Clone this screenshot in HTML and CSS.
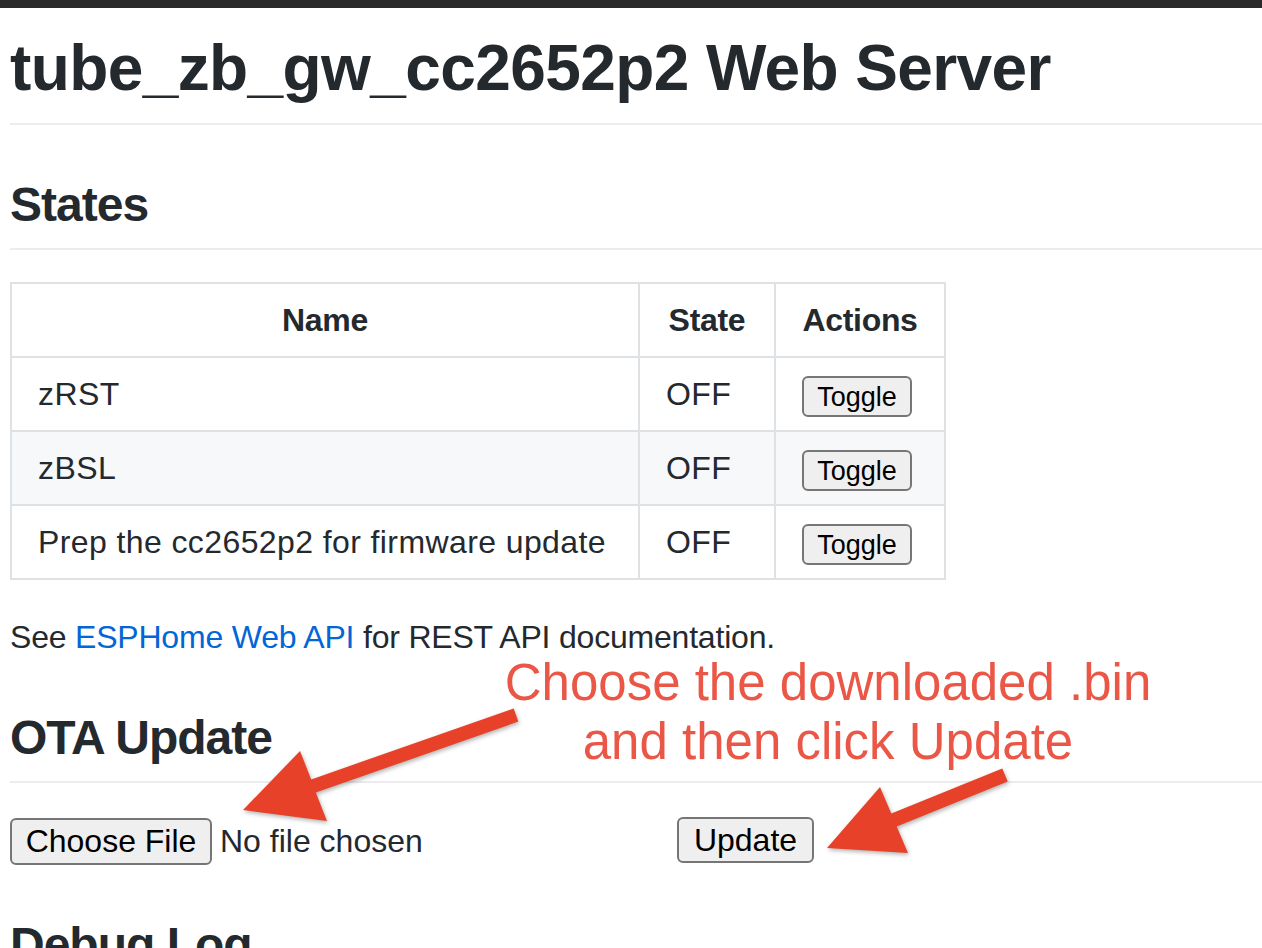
FILE: index.html
```html
<!DOCTYPE html>
<html lang="en">
<head>
<meta charset="utf-8">
<title>tube_zb_gw_cc2652p2 Web Server</title>
<link rel="stylesheet" href="styles.css">
</head>
<body>
<div class="topbar"></div>
<main class="page">
  <h1 class="title">tube_zb_gw_cc2652p2 Web Server</h1>

  <h2 class="section section-states">States</h2>
  <table class="states">
    <thead>
      <tr>
        <th class="col-name">Name</th>
        <th class="col-state">State</th>
        <th class="col-actions">Actions</th>
      </tr>
    </thead>
    <tbody>
      <tr>
        <td>zRST</td>
        <td>OFF</td>
        <td class="actions"><button type="button" class="btn-toggle">Toggle</button></td>
      </tr>
      <tr>
        <td>zBSL</td>
        <td>OFF</td>
        <td class="actions"><button type="button" class="btn-toggle">Toggle</button></td>
      </tr>
      <tr>
        <td>Prep the cc2652p2 for firmware update</td>
        <td>OFF</td>
        <td class="actions"><button type="button" class="btn-toggle">Toggle</button></td>
      </tr>
    </tbody>
  </table>

  <p class="note">See <a class="link" href="#">ESPHome Web API</a> for REST API documentation.</p>

  <h2 class="section section-ota">OTA Update</h2>
  <form class="ota">
    <div class="file-input">
      <span class="btn btn-file">Choose File</span>
      <span class="file-status">No file chosen</span>
    </div>
    <button type="button" class="btn btn-update">Update</button>
  </form>

  <h2 class="section section-debug">Debug Log</h2>
  <pre class="log"></pre>
</main>

<div class="annotation">Choose the downloaded .bin<br>and then click Update</div>

<svg class="arrows" width="1262" height="948" viewBox="0 0 1262 948" aria-hidden="true">
  <polygon class="arrow" points="513.7,708.4 518.3,721.6 315.8,792.6 327,821 243,810 300,751 311.2,779.4"/>
  <polygon class="arrow" points="1002.3,768.5 1007.7,781.5 896.7,826.5 908,853 827,848 880,787 891.3,813.5"/>
</svg>
</body>
</html>
```

FILE: styles.css
```css
html, body {
  margin: 0;
  padding: 0;
  overflow: hidden;
  background: #ffffff;
}

body {
  position: relative;
  width: 1262px;
  height: 948px;
  font-family: "Liberation Sans", Arial, Helvetica, sans-serif;
  color: #24292e;
}

.topbar {
  height: 8px;
  background: #2a2a2a;
}

.page {
  padding-left: 10px;
}

.title {
  margin: 20px 0 0;
  padding-bottom: 15px;
  font-size: 64px;
  line-height: 80px;
  font-weight: 700;
  letter-spacing: -0.6px;
  white-space: nowrap;
  border-bottom: 2px solid #eaecef;
}

.section {
  margin: 0;
  padding-bottom: 13px;
  font-size: 48px;
  line-height: 60px;
  font-weight: 700;
  letter-spacing: -1px;
  border-bottom: 2px solid #eaecef;
}

.section-states {
  margin-top: 50px;
}

.section-ota {
  margin-top: 47px;
}

.section-debug {
  margin-top: 50px;
}

/* table */
.states {
  margin-top: 32px;
  border-collapse: separate;
  border-spacing: 0;
  border-top: 2px solid #dfe2e5;
  border-left: 2px solid #dfe2e5;
  font-size: 32px;
  line-height: 48px;
}

.states th,
.states td {
  padding: 12px 26px;
  border-right: 2px solid #dfe2e5;
  border-bottom: 2px solid #dfe2e5;
  text-align: left;
  white-space: nowrap;
}

.states td {
  letter-spacing: 0.4px;
}

.states th {
  font-weight: 700;
  text-align: center;
  letter-spacing: -0.3px;
}

.col-name { width: 574px; }
.col-state { width: 82px; }
.col-actions { width: 116px; }

.states tbody tr:nth-child(even) {
  background: #f6f8fa;
}

.states td.actions {
  vertical-align: middle;
  letter-spacing: 0;
}

.btn-toggle {
  display: block;
  box-sizing: border-box;
  width: 110px;
  height: 41px;
  margin-top: 5px;
  padding: 1px 0 0;
  font-family: "Liberation Sans", Arial, sans-serif;
  font-size: 27px;
  line-height: 35px;
  color: #000000;
  background: #efefef;
  border: 2px solid #767676;
  border-radius: 6px;
  text-align: center;
}

/* paragraph */
.note {
  margin: 33px 0 0;
  font-size: 32px;
  line-height: 48px;
  letter-spacing: -0.2px;
  white-space: nowrap;
}

.link {
  color: #0366d6;
  text-decoration: none;
}

/* OTA form */
.ota {
  display: flex;
  align-items: flex-start;
  margin: 34px 0 0;
}

.file-input {
  display: flex;
  align-items: center;
  width: 667px;
  margin-top: 1px;
}

.btn {
  display: block;
  box-sizing: border-box;
  padding: 0;
  font-family: "Liberation Sans", Arial, sans-serif;
  font-size: 32px;
  color: #000000;
  background: #efefef;
  border: 2px solid #767676;
  border-radius: 6px;
  text-align: center;
}

.btn-file {
  width: 202px;
  height: 47px;
  line-height: 43px;
}

.btn-update {
  width: 137px;
  height: 46px;
  line-height: 42px;
}

.file-status {
  margin-left: 8px;
  font-size: 32px;
  line-height: 37px;
  color: #24292e;
  white-space: nowrap;
}

.log {
  margin: 32px 0 0;
  height: 200px;
}

/* annotation overlay */
.annotation {
  position: absolute;
  left: 428px;
  top: 653px;
  width: 800px;
  font-family: "Liberation Sans", Arial, sans-serif;
  font-size: 51px;
  line-height: 59px;
  color: #eb5747;
  text-align: center;
  white-space: nowrap;
}

.arrows {
  position: absolute;
  left: 0;
  top: 0;
  pointer-events: none;
  filter: drop-shadow(1px 2px 2px rgba(0, 0, 0, 0.3));
}

.arrow {
  fill: #e8412a;
}
```
